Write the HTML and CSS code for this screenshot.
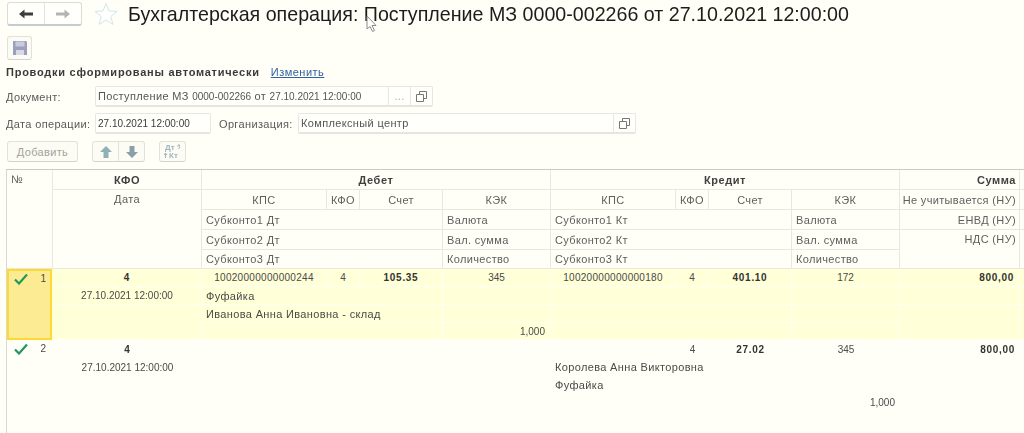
FILE: index.html
```html
<!DOCTYPE html>
<html lang="ru">
<head>
<meta charset="utf-8">
<title>Бухгалтерская операция</title>
<link rel="stylesheet" href="styles.css">
</head>
<body>
<div class="page">
  <header class="titlebar">
    <div class="navgroup">
      <button class="navbtn"><svg width="16" height="12" viewBox="0 0 16 12"><path d="M1 6 6.5 1.5V4.5H15V7.5H6.5V10.5Z" fill="#3c3c3c"/></svg></button>
      <button class="navbtn"><svg width="16" height="12" viewBox="0 0 16 12"><path d="M15 6 9.5 1.5V4.5H1V7.5H9.5V10.5Z" fill="#b4b4b0"/></svg></button>
    </div>
    <svg class="star" width="24" height="24" viewBox="0 0 24 24"><path d="M12 1.5 15 9 23 9.4 16.8 14.5 18.9 22.4 12 18 5.1 22.4 7.2 14.5 1 9.4 9 9Z" fill="#fffffb" stroke="#cfe6f0" stroke-width="1"/></svg>
    <h1 class="title">Бухгалтерская операция: Поступление МЗ 0000-002266 от 27.10.2021 12:00:00</h1>
  </header>

  <div class="savebar">
    <button class="savebtn"><svg width="16" height="16" viewBox="0 0 16 16"><path d="M1 1H14L15 2V15H1Z" fill="#9a9fbe"/><rect x="3.5" y="1.500" width="9" height="5" fill="#c9cbdc"/><rect x="4" y="10" width="8" height="5" fill="#d8d9e4"/></svg></button>
  </div>

  <div class="autoline">
    <span class="autotext">Проводки сформированы автоматически</span>
    <a class="link" href="#">Изменить</a>
  </div>

  <div class="formrow">
    <span class="lbl lbl-first">Документ:</span>
    <div class="field field-doc">
      <span class="fieldtext">Поступление МЗ <span class="n">0000-002266</span> от <span class="n">27.10.2021 12:00:00</span></span>
      <span class="fieldbtn dots">...</span>
      <span class="fieldbtn"><svg width="11" height="11" viewBox="0 0 11 11"><path d="M3.500 3V.5H10.500V7.500H8M.5 3.500H7.500V10.500H.5Z" fill="none" stroke="#777"/></svg></span>
    </div>
  </div>

  <div class="formrow formrow-second">
    <span class="lbl lbl-first">Дата операции:</span>
    <div class="field field-date"><span class="fieldtext fieldtext-dark n">27.10.2021 12:00:00</span></div>
    <span class="lbl lbl-org">Организация:</span>
    <div class="field field-org">
      <span class="fieldtext">Комплексный центр</span>
      <span class="fieldbtn"><svg width="11" height="11" viewBox="0 0 11 11"><path d="M3.500 3V.5H10.500V7.500H8M.5 3.500H7.500V10.500H.5Z" fill="none" stroke="#777"/></svg></span>
    </div>
  </div>

  <div class="toolbar">
    <button class="addbtn">Добавить</button>
    <div class="arrows">
      <button class="arrowbtn"><svg width="14" height="14" viewBox="0 0 14 14"><path d="M7 1 13 7H9.500V13H4.500V7H1Z" fill="#8fb0b4"/></svg></button>
      <button class="arrowbtn"><svg width="14" height="14" viewBox="0 0 14 14"><path d="M7 13 13 7H9.500V1H4.500V7H1Z" fill="#8a9fa8"/></svg></button>
    </div>
    <button class="dtkt"><svg width="19" height="17" viewBox="0 0 19 17"><text x="2" y="7" class="dt">Дт</text><text x="6" y="15" class="kt">Кт</text><path d="M14 3H17L15.500 1M17 4 15.500 6M2.500 15V10M1 12 2.500 10 4 12" fill="none" stroke="#9fb6bc" stroke-width="1"/></svg></button>
  </div>

  <section class="table">
    <div class="band head">
      <div class="c r5 left">№</div>
      <div class="c b">КФО</div>
      <div class="c s4 b">Дебет</div>
      <div class="c s4 b">Кредит</div>
      <div class="c b right">Сумма</div>
      <div class="c"></div>

      <div class="c r4">Дата</div>
      <div class="c">КПС</div><div class="c">КФО</div><div class="c">Счет</div><div class="c">КЭК</div>
      <div class="c">КПС</div><div class="c">КФО</div><div class="c">Счет</div><div class="c">КЭК</div>
      <div class="c right">Не учитывается (НУ)</div>
      <div class="c"></div>

      <div class="c s3 left">Субконто1 Дт</div><div class="c left">Валюта</div>
      <div class="c s3 left">Субконто1 Кт</div><div class="c left">Валюта</div>
      <div class="c right">ЕНВД (НУ)</div>
      <div class="c"></div>

      <div class="c s3 left">Субконто2 Дт</div><div class="c left">Вал. сумма</div>
      <div class="c s3 left">Субконто2 Кт</div><div class="c left">Вал. сумма</div>
      <div class="c r2 right">НДС (НУ)</div>
      <div class="c r2"></div>

      <div class="c s3 left">Субконто3 Дт</div><div class="c left">Количество</div>
      <div class="c s3 left">Субконто3 Кт</div><div class="c left">Количество</div>
    </div>

    <div class="band data selected">
      <div class="c r4 numcell current"><svg class="check" width="14" height="12" viewBox="0 0 14 12"><path d="M1 6.500 5 10.500 13 1.500" fill="none" stroke="#1d9a5c" stroke-width="2.200"/></svg><span class="n">1</span></div>
      <div class="c n nb">4</div>
      <div class="c n long">10020000000000244</div><div class="c n">4</div><div class="c n nb">105.35</div><div class="c n">345</div>
      <div class="c n long">10020000000000180</div><div class="c n">4</div><div class="c n nb">401.10</div><div class="c n">172</div>
      <div class="c n nb right">800,00</div>
      <div class="c"></div>

      <div class="c n">27.10.2021 12:00:00</div>
      <div class="c s3 left">Фуфайка</div><div class="c"></div>
      <div class="c s3"></div><div class="c"></div>
      <div class="c"></div><div class="c"></div>

      <div class="c r2"></div>
      <div class="c s3 left">Иванова Анна Ивановна - склад</div><div class="c"></div>
      <div class="c s3"></div><div class="c"></div>
      <div class="c r2"></div><div class="c r2"></div>

      <div class="c s3"></div><div class="c n right">1,000</div>
      <div class="c s3"></div><div class="c"></div>
    </div>

    <div class="band data plain">
      <div class="c r4 numcell"><svg class="check" width="14" height="12" viewBox="0 0 14 12"><path d="M1 6.500 5 10.500 13 1.500" fill="none" stroke="#1d9a5c" stroke-width="2.200"/></svg><span class="n">2</span></div>
      <div class="c n nb">4</div>
      <div class="c"></div><div class="c"></div><div class="c"></div><div class="c"></div>
      <div class="c"></div><div class="c n">4</div><div class="c n nb">27.02</div><div class="c n">345</div>
      <div class="c n nb right">800,00</div>
      <div class="c"></div>

      <div class="c n">27.10.2021 12:00:00</div>
      <div class="c s3"></div><div class="c"></div>
      <div class="c s3 left">Королева Анна Викторовна</div><div class="c"></div>
      <div class="c"></div><div class="c"></div>

      <div class="c r2"></div>
      <div class="c s3"></div><div class="c"></div>
      <div class="c s3 left">Фуфайка</div><div class="c"></div>
      <div class="c r2"></div><div class="c r2"></div>

      <div class="c s3"></div><div class="c"></div>
      <div class="c s3"></div><div class="c n right">1,000</div>
    </div>
  </section>

  <svg class="cursor" width="12" height="18" viewBox="0 0 12 18"><path d="M1 1V14L4 11.500 6.500 16.500 8.500 15.500 6 10.500H10Z" fill="#fff" stroke="#8a8a8a"/></svg>
</div>
</body>
</html>
```

FILE: styles.css
```css
* { box-sizing: border-box; }

html, body { margin: 0; height: 100%; overflow: hidden; }

body {
  background: #fffff8;
  color: #4a4a4a;
  font-family: "Liberation Sans", Arial, sans-serif;
  font-size: 11px;
  letter-spacing: 0.35px;
}

.n { font-size: 10px; letter-spacing: 0; }

.page {
  position: relative;
  height: 433px;
  display: flex;
  flex-direction: column;
  filter: blur(0.45px);
}

button {
  font: inherit;
  letter-spacing: inherit;
  padding: 0;
  margin: 0;
  background: #fcfcf5;
  border: 1px solid #e2e2db;
  border-bottom-color: #d4d4cd;
  border-radius: 3px;
  display: flex;
  align-items: center;
  justify-content: center;
}

.titlebar {
  display: flex;
  align-items: center;
  height: 24px;
  margin: 2px 0 0 7px;
}

.navgroup {
  display: flex;
  width: 75px;
  height: 24px;
  border: 1px solid #dcdcd4;
  border-bottom: 2px solid #c4ccd0;
  border-radius: 3px;
  background: #fffffb;
}

.navbtn {
  flex: 1;
  border: 0;
  border-radius: 0;
  background: transparent;
}

.navbtn + .navbtn { border-left: 1px solid #e4e4dc; }

.star { margin-left: 12px; }

.title {
  margin: 0 0 0 10px;
  font-weight: 400;
  font-size: 19.65px;
  letter-spacing: 0;
  line-height: 24px;
  color: #1c1c1c;
  white-space: nowrap;
}

.savebar { margin: 10px 0 0 7px; height: 24px; }

.savebtn { width: 25px; height: 24px; }

.autoline {
  display: flex;
  align-items: center;
  height: 14px;
  margin: 5px 0 0 6px;
}

.autotext {
  font-weight: 700;
  color: #3a3a3a;
  letter-spacing: 0.75px;
}

.link {
  margin-left: 11px;
  color: #2f63a0;
  text-decoration: underline;
  letter-spacing: 0.5px;
}

.formrow {
  display: flex;
  align-items: center;
  height: 21px;
  margin: 7px 0 0 6px;
}

.formrow-second { margin-top: 6px; }

.lbl { color: #5a5a5a; white-space: nowrap; }

.lbl-first { width: 89px; }

.lbl-org { margin-left: 8px; width: 79px; }

.field {
  display: flex;
  align-items: center;
  height: 21px;
  border: 1px solid #e8e8e1;
  border-bottom: 2px solid #e6e6df;
  border-radius: 2px;
  background: #fffffb;
}

.field-doc { width: 338px; }

.field-date { width: 116px; }

.field-org { width: 338px; }

.fieldtext {
  flex: 1;
  padding-left: 2px;
  color: #555;
  white-space: nowrap;
  overflow: hidden;
}

.fieldtext-dark { color: #3c3c3c; }

.fieldbtn {
  width: 22px;
  height: 100%;
  border-left: 1px solid #e8e8e1;
  display: flex;
  align-items: center;
  justify-content: center;
}

.dots { color: #aaa; }

.toolbar {
  display: flex;
  align-items: center;
  height: 21px;
  margin: 7px 0 0 7px;
}

.addbtn {
  width: 71px;
  height: 21px;
  color: #a2a29c;
}

.arrows {
  display: flex;
  width: 53px;
  height: 21px;
  margin-left: 14px;
  border: 1px solid #e2e2db;
  border-bottom-color: #d4d4cd;
  border-radius: 3px;
  background: #fcfcf5;
}

.arrowbtn {
  flex: 1;
  border: 0;
  border-radius: 0;
  background: transparent;
}

.arrowbtn + .arrowbtn { border-left: 1px solid #e2e2db; }

.dtkt { width: 27px; height: 21px; margin-left: 14px; }

.dt, .kt {
  font-family: "Liberation Sans", Arial, sans-serif;
  font-size: 8px;
  letter-spacing: 0;
  fill: #9fb6bc;
  font-weight: 700;
}

.table {
  flex: 1;
  margin: 7px 0 0 6px;
  border-top: 1px solid #cbcbc3;
  border-left: 1px solid #d8d8d0;
}

.band {
  display: grid;
  grid-template-columns: 46px 149px 125px 33px 83px 108px 125px 33px 83px 108px 120px 5px;
}

.head {
  grid-template-rows: 20px 20px 20px 20px 19px;
  height: 99px;
}

.data { grid-template-rows: 18px 18px 18px 17px; }

.c {
  display: flex;
  align-items: center;
  justify-content: center;
  white-space: nowrap;
  overflow: hidden;
  min-width: 0;
}

.head .c {
  border-right: 1px solid #e8e8e0;
  border-bottom: 1px solid #e8e8e0;
  color: #5e5e5e;
}

.head .r4, .head .r5, .head .r2 { align-items: flex-start; padding-top: 3px; }

.selected { background: #ffffd8; }

.selected .c {
  border-right: 1px solid #fffff4;
  border-bottom: 1px solid #fffff4;
}

.left { justify-content: flex-start; padding-left: 4px; }

.right { justify-content: flex-end; padding-right: 3px; }

.data .right { padding-right: 5px; }

.b { font-weight: 700; color: #333; letter-spacing: 0.55px; }

.head .b { color: #404040; }

.nb { font-weight: 700; color: #333; letter-spacing: 0.7px; }

.long { letter-spacing: 0.3px; }

.s3 { grid-column: span 3; }

.s4 { grid-column: span 4; }

.r2 { grid-row: span 2; }

.r4 { grid-row: span 4; }

.r5 { grid-row: span 5; }

.numcell {
  justify-content: space-between;
  align-items: flex-start;
  padding: 3px 7px 0 7px;
}

.selected .current {
  background: #fdeb94;
  border: 2px solid #ffd933;
  margin-right: 1px;
  padding: 2px 4px 0 5px;
}

.check { flex: none; }

.cursor {
  position: absolute;
  left: 366px;
  top: 15px;
}
```
